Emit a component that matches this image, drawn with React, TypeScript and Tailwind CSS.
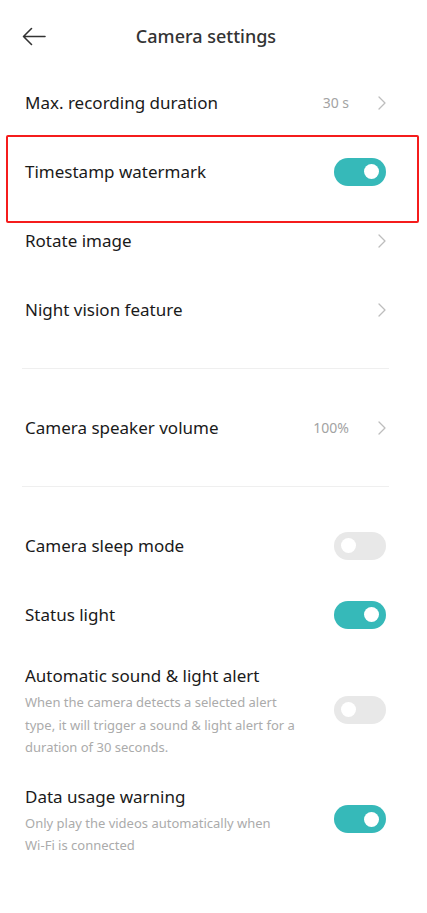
import { ReactNode } from 'react';

function Chevron() {
  return (
    <svg width="8" height="14" viewBox="0 0 8 14" fill="none" className="shrink-0">
      <path d="M1 1l6 6-6 6" stroke="#bdbdbd" strokeWidth="1.3" strokeLinecap="round" strokeLinejoin="round" />
    </svg>
  );
}

function Toggle({ on }: { on: boolean }) {
  return (
    <div
      className={`w-[52px] h-[28px] rounded-full flex items-center shrink-0 px-[7px] ${
        on ? 'bg-[#36b9b9] justify-end' : 'bg-[#e8e8e8] justify-start'
      }`}
    >
      <div className="w-[15px] h-[15px] rounded-full bg-white" />
    </div>
  );
}

function Row({ label, value, children }: { label: string; value?: string; children?: ReactNode }) {
  return (
    <div className="h-[69px] flex items-center pl-[25px] pr-[41px]">
      <span className="flex-1 text-[17px] text-[#1a1a1a]">{label}</span>
      {value && <span className="text-[14px] text-[#a3a3a3] mr-[29px]">{value}</span>}
      {children ?? <Chevron />}
    </div>
  );
}

function DescRow({ label, lines, on }: { label: string; lines: string[]; on: boolean }) {
  return (
    <div className="flex items-center pl-[25px] pr-[41px] pt-[15px] pb-[11px]">
      <div className="flex-1">
        <div className="text-[17px] leading-[24px] text-[#1a1a1a]">{label}</div>
        <div className="mt-[3px] text-[13px] leading-[22.5px] text-[#ababab]">
          {lines.map((l) => (
            <div key={l} className="whitespace-nowrap">{l}</div>
          ))}
        </div>
      </div>
      <div className="mb-[3px]">
        <Toggle on={on} />
      </div>
    </div>
  );
}

function Divider() {
  return <div className="h-px bg-[#efefef] ml-[22px] mr-[38px] my-[24px]" />;
}

export default function App() {
  return (
    <div className="w-[427px] min-h-[913px] bg-white" style={{ fontFamily: '"Noto Sans", sans-serif' }}>
      {/* Header */}
      <div className="h-[68px] flex items-center pl-[22px] pr-[61px] pt-[4px]">
        <svg width="24" height="19" viewBox="0 0 24 19" fill="none" className="shrink-0">
          <path d="M23 9.5H1.5M9.5 1.5L1.5 9.5l8 8" stroke="#333" strokeWidth="1.6" strokeLinecap="round" strokeLinejoin="round" />
        </svg>
        <h1 className="flex-1 text-center text-[18px] text-[#333] font-medium">Camera settings</h1>
      </div>

      <Row label="Max. recording duration" value="30 s" />
      <div className="relative">
        <Row label="Timestamp watermark">
          <Toggle on />
        </Row>
        <div className="absolute left-[6px] right-[8px] top-[-2px] bottom-[-17px] border-2 border-[#f51c1c] rounded-[2px] pointer-events-none" />
      </div>
      <Row label="Rotate image" />
      <Row label="Night vision feature" />

      <Divider />
      <Row label="Camera speaker volume" value="100%" />
      <Divider />

      <Row label="Camera sleep mode">
        <Toggle on={false} />
      </Row>
      <Row label="Status light">
        <Toggle on />
      </Row>
      <DescRow
        label="Automatic sound & light alert"
        lines={[
          'When the camera detects a selected alert',
          'type, it will trigger a sound & light alert for a',
          'duration of 30 seconds.',
        ]}
        on={false}
      />
      <DescRow
        label="Data usage warning"
        lines={['Only play the videos automatically when', 'Wi-Fi is connected']}
        on
      />
    </div>
  );
}
